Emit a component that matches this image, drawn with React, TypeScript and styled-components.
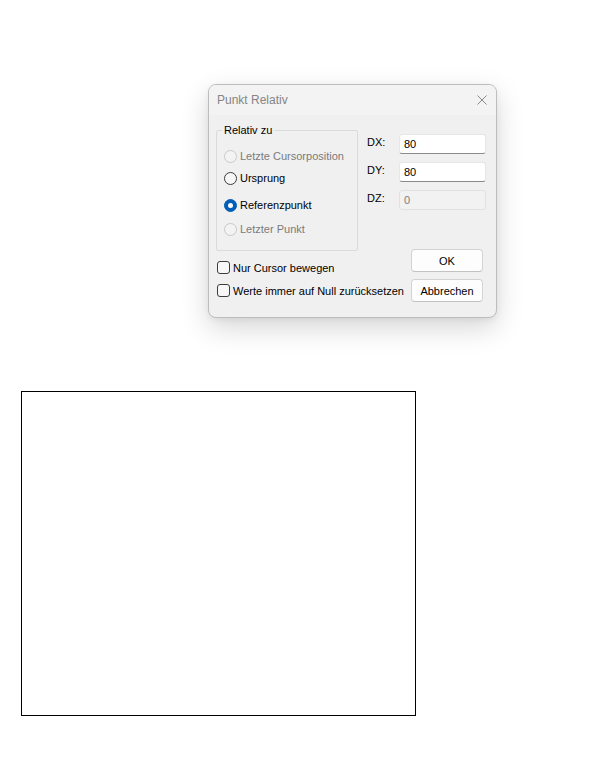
import React from "react";
import styled, { createGlobalStyle } from "styled-components";

const GlobalStyle = createGlobalStyle`
  body {
    margin: 0;
    background: #ffffff;
    font-family: "Liberation Sans", Arial, sans-serif;
    font-size: 11px;
    color: #000000;
  }
`;

const Page = styled.div`
  padding-top: 84px;
`;

const Dialog = styled.div`
  margin-left: 208px;
  width: 289px;
  box-sizing: border-box;
  border: 1px solid #bdbdbd;
  border-radius: 8px;
  background: #f0f0f0;
  overflow: hidden;
  box-shadow: 0 10px 28px rgba(0, 0, 0, 0.16), 0 2px 6px rgba(0, 0, 0, 0.06);
`;

const TitleBar = styled.div`
  display: flex;
  align-items: center;
  height: 29px;
  padding: 0 9px 1px 8px;
  background: #f3f3f3;
  font-size: 12px;
  color: #858585;
`;

const Title = styled.span`
  flex: 1;
`;

const Body = styled.div`
  padding: 9px 13px 15px 7px;
`;

const TopRow = styled.div`
  display: flex;
  align-items: flex-start;
`;

const GroupBox = styled.fieldset`
  flex-shrink: 0;
  margin: 0;
  width: 142px;
  box-sizing: border-box;
  border: 1px solid #dadada;
  border-radius: 2px;
  padding: 9px 6px 10px 7px;
`;

const Legend = styled.legend`
  padding: 0 2px;
  margin-left: -2px;
  line-height: 12px;
  color: #000;
`;

const OptionRow = styled.div<{ $gap?: number }>`
  display: flex;
  align-items: center;
  gap: 3px;
  height: 22px;
  margin-top: ${(p) => p.$gap ?? 0}px;
`;

const OptionText = styled.span<{ $disabled?: boolean }>`
  color: ${(p) => (p.$disabled ? "#7b7b7b" : "#000")};
`;

const Radio = styled.span<{ $checked?: boolean; $disabled?: boolean }>`
  display: inline-flex;
  align-items: center;
  justify-content: center;
  width: 13px;
  height: 13px;
  box-sizing: border-box;
  border-radius: 50%;
  border: 1px solid
    ${(p) => (p.$checked ? "#005fb8" : p.$disabled ? "#c9c9c9" : "#3a3a3a")};
  background: ${(p) => (p.$checked ? "#005fb8" : p.$disabled ? "#f3f3f3" : "#f7f7f7")};

  &::after {
    content: "";
    display: ${(p) => (p.$checked ? "block" : "none")};
    width: 5px;
    height: 5px;
    border-radius: 50%;
    background: #ffffff;
  }
`;

const Fields = styled.div`
  flex-shrink: 0;
  display: flex;
  flex-direction: column;
  gap: 8px;
  margin-left: 9px;
  padding-top: 10px;
`;

const FieldRow = styled.div`
  display: flex;
  align-items: flex-start;
`;

const FieldLabel = styled.span`
  width: 32px;
  padding-top: 2px;
  line-height: 12px;
`;

const Input = styled.div<{ $disabled?: boolean }>`
  width: 87px;
  height: 20px;
  box-sizing: border-box;
  padding: 0 4px;
  display: flex;
  align-items: center;
  border: 1px solid ${(p) => (p.$disabled ? "#e1e1e1" : "#e6e6e6")};
  border-bottom-color: ${(p) => (p.$disabled ? "#e1e1e1" : "#8a8a8a")};
  border-radius: 3px;
  background: ${(p) => (p.$disabled ? "#f2f2f2" : "#ffffff")};
  color: ${(p) => (p.$disabled ? "#7b7b7b" : "#000")};
`;

const BottomRow = styled.div`
  display: flex;
  align-items: flex-start;
`;

const Checks = styled.div`
  display: flex;
  flex-direction: column;
  padding-top: 5px;
  padding-left: 1px;
`;

const CheckRow = styled.label`
  display: flex;
  align-items: center;
  gap: 3px;
  height: 23px;
`;

const CheckBox = styled.span`
  width: 13px;
  height: 13px;
  box-sizing: border-box;
  border: 1px solid #3d3d3d;
  border-radius: 3px;
  background: #f7f7f7;
`;

const Buttons = styled.div`
  display: flex;
  flex-direction: column;
  gap: 7px;
  margin-left: auto;
  margin-top: -2px;
`;

const Button = styled.button`
  width: 72px;
  height: 23px;
  box-sizing: border-box;
  padding: 0;
  border: 1px solid #d3d3d3;
  border-bottom-color: #c2c2c2;
  border-radius: 4px;
  background: #fdfdfd;
  font-family: inherit;
  font-size: 11px;
  color: #000;
`;

const Canvas = styled.div`
  margin: 73px 0 0 21px;
  width: 395px;
  height: 325px;
  box-sizing: border-box;
  border: 1px solid #000000;
  background: #ffffff;
`;

const CloseIcon = () => (
  <svg width="10" height="10" viewBox="0 0 10 10">
    <path d="M0.5 0.5 L9.5 9.5 M9.5 0.5 L0.5 9.5" stroke="#8a8a8a" strokeWidth="1" fill="none" />
  </svg>
);

const options = [
  { label: "Letzte Cursorposition", disabled: true, gap: 0 },
  { label: "Ursprung", gap: 0 },
  { label: "Referenzpunkt", checked: true, gap: 5 },
  { label: "Letzter Punkt", disabled: true, gap: 2 },
];

const fields = [
  { label: "DX:", value: "80" },
  { label: "DY:", value: "80" },
  { label: "DZ:", value: "0", disabled: true },
];

export default function App() {
  return (
    <Page>
      <GlobalStyle />
      <Dialog>
        <TitleBar>
          <Title>Punkt Relativ</Title>
          <CloseIcon />
        </TitleBar>
        <Body>
          <TopRow>
            <GroupBox>
              <Legend>Relativ zu</Legend>
              {options.map((o) => (
                <OptionRow key={o.label} $gap={o.gap}>
                  <Radio $checked={o.checked} $disabled={o.disabled} />
                  <OptionText $disabled={o.disabled}>{o.label}</OptionText>
                </OptionRow>
              ))}
            </GroupBox>
            <Fields>
              {fields.map((f) => (
                <FieldRow key={f.label}>
                  <FieldLabel>{f.label}</FieldLabel>
                  <Input $disabled={f.disabled}>{f.value}</Input>
                </FieldRow>
              ))}
            </Fields>
          </TopRow>
          <BottomRow>
            <Checks>
              <CheckRow>
                <CheckBox />
                <span>Nur Cursor bewegen</span>
              </CheckRow>
              <CheckRow>
                <CheckBox />
                <span>Werte immer auf Null zurücksetzen</span>
              </CheckRow>
            </Checks>
            <Buttons>
              <Button>OK</Button>
              <Button>Abbrechen</Button>
            </Buttons>
          </BottomRow>
        </Body>
      </Dialog>
      <Canvas />
    </Page>
  );
}
